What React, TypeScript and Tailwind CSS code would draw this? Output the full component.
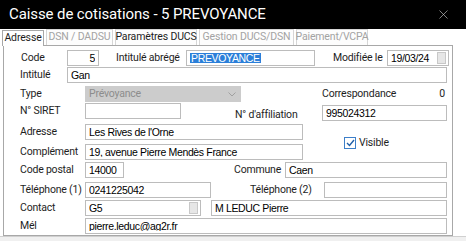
import { X } from "lucide-react";
import type { ReactNode } from "react";

const ui = "font-['Roboto',sans-serif] text-[10.5px] tracking-[-0.2px] text-[#1e1e1e] whitespace-nowrap";
const field = "font-['Liberation_Sans',Arial,sans-serif] text-[10.5px] tracking-[-0.35px] text-black whitespace-nowrap";

function Input({
  width,
  value,
  align = "left",
  button = false,
  className = "",
}: {
  width: string;
  value?: ReactNode;
  align?: "left" | "right";
  button?: boolean;
  className?: string;
}) {
  return (
    <div
      className={`h-[16px] ${width} shrink-0 border border-[#bcbcbc] bg-white flex items-center px-[3px] ${field} ${className}`}
    >
      <span className={`flex-1 truncate leading-none ${align === "right" ? "text-right" : ""}`}>
        {value}
      </span>
      {button && (
        <span className="w-[9px] h-[12px] border border-[#c8c8c8] bg-[#e6e6e6] -mr-[1px]" />
      )}
    </div>
  );
}

function Label({ width, children, className = "" }: { width: string; children: ReactNode; className?: string }) {
  return <div className={`${width} shrink-0 ${ui} leading-none ${className}`}>{children}</div>;
}

function Tab({ label, active = false, disabled = false, width }: { label: string; active?: boolean; disabled?: boolean; width: string }) {
  return (
    <div
      className={`${width} h-full flex items-center justify-center border-t border-x font-['Roboto',sans-serif] text-[10.5px] tracking-[-0.15px] whitespace-nowrap leading-none ${
        active ? "bg-white border-[#a8a8a8] -mb-[1px] pb-[1px]" : "bg-[#fdfdfd] border-[#d6d6d6] mt-[2px]"
      } ${disabled ? "text-[#a3a3a3]" : "text-[#1e1e1e]"}`}
    >
      {label}
    </div>
  );
}

export default function App() {
  return (
    <div className="w-[466px] h-[241px] bg-white overflow-hidden flex flex-col">
      {/* title bar */}
      <div className="h-[29px] shrink-0 bg-black flex items-center justify-between pl-[9px] pr-[15px]">
        <span className="font-['Roboto',sans-serif] text-[15px] tracking-[-0.1px] text-white leading-none whitespace-nowrap">
          Caisse de cotisations - 5 PREVOYANCE
        </span>
        <X size={15} strokeWidth={1} className="text-[#cfcfcf]" />
      </div>

      {/* tabs */}
      <div className="h-[16px] shrink-0 flex items-end pl-[2px] gap-[2px] relative z-10">
        <Tab label="Adresse" active width="w-[42px]" />
        <Tab label="DSN / DADSU" disabled width="w-[67px]" />
        <Tab label="Paramètres DUCS" width="w-[82px]" />
        <Tab label="Gestion DUCS/DSN" disabled width="w-[95px]" />
        <Tab label="Paiement/VCPA" disabled width="w-[72px]" />
      </div>

      {/* panel */}
      <div className="ml-[3px] w-[450px] h-[191px] shrink-0 border border-[#a8a8a8] bg-white flex flex-col pl-[16px]">
        {/* Code */}
        <div className="mt-[4px] h-[16px] flex items-center">
          <Label width="w-[47px]" className="pl-[1px]">Code</Label>
          <Input width="w-[32px]" value="5" align="right" />
          <Label width="w-[70px]" className="ml-[17px]">Intitulé abrégé</Label>
          <Input
            width="w-[129px]"
            value={<span className="bg-[#2b7fd9] text-white px-[1px]">PREVOYANCE</span>}
          />
          <Label width="w-[54px]" className="ml-[18px]">Modifiée le</Label>
          <Input width="w-[62px]" value="19/03/24" button />
        </div>

        {/* Intitulé */}
        <div className="mt-[1px] h-[16px] flex items-center">
          <Label width="w-[47px]">Intitulé</Label>
          <Input width="w-[380px]" value="Gan" />
        </div>

        {/* Type / Correspondance */}
        <div className="mt-[3px] h-[16px] flex items-center">
          <Label width="w-[65px]">Type</Label>
          <div className="w-[156px] h-[16px] shrink-0 bg-[#cccccc] flex items-center justify-between px-[3px]">
            <span className={`${ui} !text-[#8c8c8c] leading-none pl-[1px]`}>Prévoyance</span>
            <svg width="8" height="5" viewBox="0 0 8 5" className="mr-[2px]">
              <path d="M0.5 0.5 L4 4 L7.5 0.5" fill="none" stroke="#a0a0a0" strokeWidth="1" />
            </svg>
          </div>
          <div className="ml-[81px] w-[125px] flex justify-between items-center">
            <Label width="w-auto">Correspondance</Label>
            <span className={`${ui} leading-none pr-[2px]`}>0</span>
          </div>
        </div>

        {/* SIRET / affiliation */}
        <div className="mt-[1px] h-[18px] flex items-start">
          <div className="h-[16px] flex items-center">
            <Label width="w-[65px]">N° SIRET</Label>
            <Input width="w-[96px]" />
          </div>
          <div className="mt-[2px] h-[16px] flex items-center ml-[54px]">
            <Label width="w-[87px]" className="pt-[4px]">N° d'affiliation</Label>
            <Input width="w-[125px]" value="995024312" />
          </div>
        </div>

        {/* Adresse / Complément / Visible */}
        <div className="mt-[3px] flex items-center">
          <div className="flex flex-col gap-[4px]">
            <div className="h-[16px] flex items-center">
              <Label width="w-[65px]">Adresse</Label>
              <Input width="w-[218px]" value="Les Rives de l'Orne" />
            </div>
            <div className="h-[16px] flex items-center">
              <Label width="w-[65px]">Complément</Label>
              <Input width="w-[218px]" value="19, avenue Pierre Mendès France" />
            </div>
          </div>
          <div className="ml-[41px] mt-[2px] flex items-center gap-[3px]">
            <span className="w-[12px] h-[12px] border border-[#3d7fc9] bg-white flex items-center justify-center">
              <svg width="9" height="8" viewBox="0 0 9 8">
                <path d="M1 4 L3.5 6.5 L8 1" fill="none" stroke="#1f5fa8" strokeWidth="1.4" />
              </svg>
            </span>
            <span className={`${ui} leading-none`}>Visible</span>
          </div>
        </div>

        {/* Code postal / Commune */}
        <div className="mt-[2px] h-[16px] flex items-center">
          <Label width="w-[65px]">Code postal</Label>
          <Input width="w-[39px]" value="14000" />
          <Label width="w-[51px]" className="ml-[110px]">Commune</Label>
          <Input width="w-[162px]" value="Caen" />
        </div>

        {/* Téléphones */}
        <div className="mt-[4px] h-[16px] flex items-center">
          <Label width="w-[65px]">Téléphone (1)</Label>
          <Input width="w-[126px]" value="0241225042" />
          <Label width="w-[74px]" className="ml-[39px]">Téléphone (2)</Label>
          <Input width="w-[123px]" />
        </div>

        {/* Contact */}
        <div className="mt-[2px] h-[16px] flex items-center">
          <Label width="w-[65px]">Contact</Label>
          <Input width="w-[116px]" value="G5" button />
          <Input width="w-[236px]" value="M LEDUC Pierre" className="ml-[10px]" />
        </div>

        {/* Mél */}
        <div className="mt-[2px] h-[16px] flex items-center">
          <Label width="w-[65px]">Mél</Label>
          <Input width="w-[362px]" value="pierre.leduc@ag2r.fr" />
        </div>
      </div>
      <div className="flex-1 bg-[#f0f0f0] border-t border-[#d0d0d0]" />
    </div>
  );
}
